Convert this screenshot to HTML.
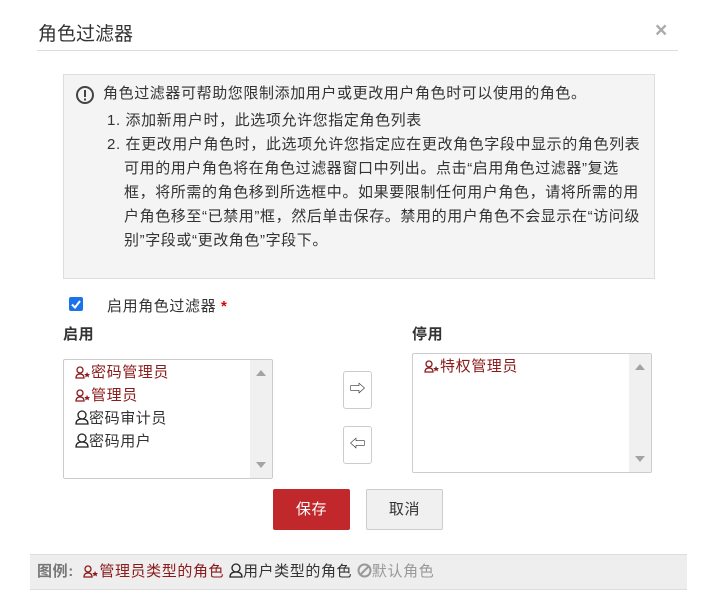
<!DOCTYPE html>
<html><head><meta charset="utf-8"><style>
*{box-sizing:border-box;margin:0;padding:0}
body{width:716px;height:612px;background:#fff;font-family:"Liberation Sans","Noto Sans CJK SC",sans-serif;color:#333;position:relative;overflow:hidden;font-size:15px;letter-spacing:0.6px}
.a{position:absolute}
.t{white-space:nowrap}
.admin{color:#8b1a1a}
.ic{display:inline-block;vertical-align:-2px;margin-right:0}
.sb{position:absolute;right:0;top:0;bottom:0;width:22px;background:#f0f0f0}
.up,.dn{position:absolute;left:6px;width:0;height:0;border-left:5px solid transparent;border-right:5px solid transparent}
.up{top:10px;border-bottom:6px solid #a3a3a3}
.dn{bottom:10px;border-top:6px solid #a3a3a3}
</style></head><body>
<div class="a t" style="left:38px;top:19px;font-size:19px;color:#333;letter-spacing:0">角色过滤器</div>
<div class="a" style="left:655px;top:19px;font-size:21px;font-weight:bold;color:#aaa">×</div>
<div class="a" style="left:37px;top:50px;width:641px;height:1px;background:#ddd"></div>

<div class="a" style="left:63px;top:74px;width:592px;height:205px;background:#f4f4f4;border:1px solid #ddd"></div>
<svg class="a" style="left:75px;top:85px" width="20" height="20" viewBox="0 0 20 20"><circle cx="10" cy="10" r="8" fill="none" stroke="#444" stroke-width="2"/><rect x="9" y="5" width="2" height="7" fill="#444"/><rect x="9" y="13.5" width="2" height="2" fill="#444"/></svg>
<div class="a t" style="left:103px;top:82px;line-height:24px;color:#333">角色过滤器可帮助您限制添加用户或更改用户角色时可以使用的角色。</div>
<div class="a t" style="left:107px;top:109px;line-height:24px">1. 添加新用户时，此选项允许您指定角色列表</div>
<div class="a t" style="left:107px;top:133px;line-height:24px">2. 在更改用户角色时，此选项允许您指定应在更改角色字段中显示的角色列表</div>
<div class="a t" style="left:124px;top:157px;line-height:24px">可用的用户角色将在角色过滤器窗口中列出。点击“启用角色过滤器”复选<br>框，将所需的角色移到所选框中。如果要限制任何用户角色，请将所需的用<br>户角色移至“已禁用”框，然后单击保存。禁用的用户角色不会显示在“访问级<br>别”字段或“更改角色”字段下。</div>

<div class="a" style="left:69px;top:297px;width:14px;height:14px;background:#1a73e8;border-radius:2px"></div>
<svg class="a" style="left:69px;top:297px" width="14" height="14"><path d="M3 7.5 L6 10.5 L11 4" stroke="#fff" stroke-width="2" fill="none"/></svg>
<div class="a t" style="left:107px;top:295px">启用角色过滤器 <span style="color:#d00;font-weight:bold">*</span></div>
<div class="a t" style="left:63px;top:323px;font-weight:bold">启用</div>
<div class="a t" style="left:412px;top:323px;font-weight:bold">停用</div>

<div class="a" style="left:63px;top:359px;width:210px;height:120px;border:1px solid #ccc;border-radius:2px;background:#fff">
<div class="sb"><div class="up"></div><div class="dn"></div></div>
<div class="a t" style="left:11px;top:1px;line-height:23px">
<div class="admin"><svg class="ic" width="16" height="13"><circle cx="5" cy="4" r="3" fill="none" stroke="#8b1a1a" stroke-width="1.3"/><path d="M1 12 Q1 8 5 8 Q9 8 9 12Z" fill="none" stroke="#8b1a1a" stroke-width="1.3"/><path d="M12 6 l1 2 2 0 -1.5 1.5 .6 2 -2 -1.2 -2 1.2 .6 -2 -1.5 -1.5 2 0z" fill="#8b1a1a"/></svg>密码管理员</div>
<div class="admin"><svg class="ic" width="16" height="13"><circle cx="5" cy="4" r="3" fill="none" stroke="#8b1a1a" stroke-width="1.3"/><path d="M1 12 Q1 8 5 8 Q9 8 9 12Z" fill="none" stroke="#8b1a1a" stroke-width="1.3"/><path d="M12 6 l1 2 2 0 -1.5 1.5 .6 2 -2 -1.2 -2 1.2 .6 -2 -1.5 -1.5 2 0z" fill="#8b1a1a"/></svg>管理员</div>
<div><svg class="ic" width="14" height="15"><circle cx="7" cy="5" r="4" fill="none" stroke="#222" stroke-width="1.3"/><path d="M1 14 Q1 9 7 9 Q13 9 13 14Z" fill="none" stroke="#222" stroke-width="1.3"/></svg>密码审计员</div>
<div><svg class="ic" width="14" height="15"><circle cx="7" cy="5" r="4" fill="none" stroke="#222" stroke-width="1.3"/><path d="M1 14 Q1 9 7 9 Q13 9 13 14Z" fill="none" stroke="#222" stroke-width="1.3"/></svg>密码用户</div>
</div></div>

<div class="a" style="left:343px;top:371px;width:29px;height:38px;border:1px solid #ccc;border-radius:3px;background:#fff;text-align:center;line-height:36px;font-size:16px;letter-spacing:0">⇨</div>
<div class="a" style="left:343px;top:426px;width:29px;height:38px;border:1px solid #ccc;border-radius:3px;background:#fff;text-align:center;line-height:36px;font-size:16px;letter-spacing:0">⇦</div>

<div class="a" style="left:412px;top:353px;width:240px;height:120px;border:1px solid #ccc;border-radius:2px;background:#fff">
<div class="sb"><div class="up"></div><div class="dn"></div></div>
<div class="a t admin" style="left:11px;top:1px;line-height:23px"><svg class="ic" width="16" height="13"><circle cx="5" cy="4" r="3" fill="none" stroke="#8b1a1a" stroke-width="1.3"/><path d="M1 12 Q1 8 5 8 Q9 8 9 12Z" fill="none" stroke="#8b1a1a" stroke-width="1.3"/><path d="M12 6 l1 2 2 0 -1.5 1.5 .6 2 -2 -1.2 -2 1.2 .6 -2 -1.5 -1.5 2 0z" fill="#8b1a1a"/></svg>特权管理员</div>
</div>

<div class="a" style="left:273px;top:489px;width:77px;height:41px;background:#c0282b;border-radius:2px;color:#fff;text-align:center;line-height:41px">保存</div>
<div class="a" style="left:366px;top:489px;width:77px;height:41px;background:#f0f0f0;border:1px solid #ccc;border-radius:2px;color:#333;text-align:center;line-height:39px">取消</div>

<div class="a" style="left:30px;top:554px;width:657px;height:36px;background:#eee;border-top:1px solid #ddd;border-bottom:1px solid #ddd"></div>
<div class="a t" style="left:37px;top:562px;line-height:20px"><b style="color:#777">图例:</b>&nbsp; <span class="admin"><svg class="ic" width="16" height="13"><circle cx="5" cy="4" r="3" fill="none" stroke="#8b1a1a" stroke-width="1.3"/><path d="M1 12 Q1 8 5 8 Q9 8 9 12Z" fill="none" stroke="#8b1a1a" stroke-width="1.3"/><path d="M12 6 l1 2 2 0 -1.5 1.5 .6 2 -2 -1.2 -2 1.2 .6 -2 -1.5 -1.5 2 0z" fill="#8b1a1a"/></svg>管理员类型的角色</span> <svg class="ic" width="14" height="15"><circle cx="7" cy="5" r="4" fill="none" stroke="#222" stroke-width="1.3"/><path d="M1 14 Q1 9 7 9 Q13 9 13 14Z" fill="none" stroke="#222" stroke-width="1.3"/></svg>用户类型的角色 <span style="color:#999"><svg class="ic" width="15" height="15"><circle cx="7.5" cy="7.5" r="6" fill="none" stroke="#999" stroke-width="2"/><path d="M3.5 11.5 L11.5 3.5" stroke="#999" stroke-width="2"/></svg>默认角色</span></div>
</body></html>
